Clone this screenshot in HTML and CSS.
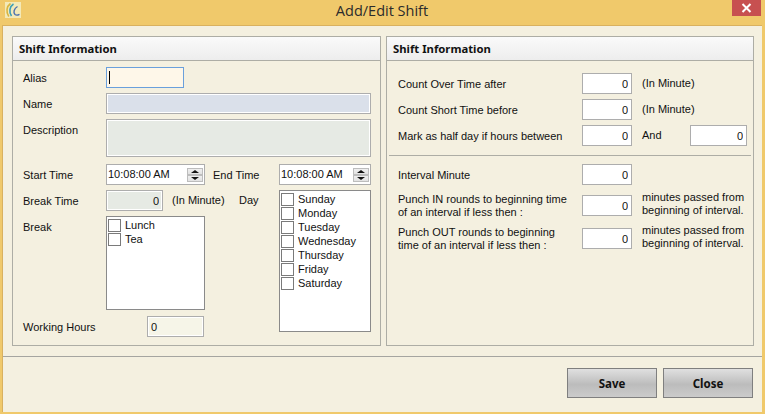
FILE: index.html
```html
<!DOCTYPE html>
<html lang="en">
<head>
    <meta charset="UTF-8">
    <meta name="viewport" content="width=device-width, initial-scale=1.0">
    <title>Add/Edit Shift</title>
    <link rel="stylesheet" href="styles.css">
</head>
<body>
    <div class="window">
        <div class="titlebar">
            <svg class="app-icon" width="16" height="16" viewBox="0 0 16 16">
                <rect width="16" height="16" fill="#f3e9b8"/>
                <path d="M5.5 1.5C1.5 4.5 0.8 10 3.8 14.5" fill="none" stroke="#d9b53f" stroke-width="1.6"/>
                <path d="M8.5 2C4.5 4.5 3.8 10 6.5 14" fill="none" stroke="#3f9fb5" stroke-width="1.6"/>
                <path d="M12.5 4.5C9 6.5 8 10.5 10 12.5C11 13.3 12.8 13.2 14.5 12.3" fill="none" stroke="#4c6fae" stroke-width="1.4"/>
            </svg>
            <span class="title">Add/Edit Shift</span>
            <div class="close-x">
                <svg width="11" height="10" viewBox="0 0 11 10">
                    <path d="M1.5 1L9.5 9M9.5 1L1.5 9" stroke="#fff" stroke-width="2"/>
                </svg>
            </div>
        </div>
        <div class="content">
            <div class="panels">
                <section class="panel">
                    <h2 class="panel-head">Shift Information</h2>
                    <div class="left-grid">
                        <label>Alias</label>
                        <div class="field alias span3"><span class="caret"></span></div>

                        <label>Name</label>
                        <input class="field name span3" type="text" readonly>

                        <label>Description</label>
                        <textarea class="field desc span3" readonly></textarea>

                        <label>Start Time</label>
                        <div class="field time">
                            <span>10:08:00 AM</span>
                            <div class="spin"><i class="up"></i><i class="down"></i></div>
                        </div>
                        <label class="end-label">End Time</label>
                        <div class="field time">
                            <span>10:08:00 AM</span>
                            <div class="spin"><i class="up"></i><i class="down"></i></div>
                        </div>

                        <label>Break Time</label>
                        <div class="break-row">
                            <input class="field break-val num" type="text" value="0" readonly>
                            <span class="unit">(In Minute)</span>
                            <span class="day-label">Day</span>
                        </div>
                        <div class="checklist days">
                            <div class="check"><i></i>Sunday</div>
                            <div class="check"><i></i>Monday</div>
                            <div class="check"><i></i>Tuesday</div>
                            <div class="check"><i></i>Wednesday</div>
                            <div class="check"><i></i>Thursday</div>
                            <div class="check"><i></i>Friday</div>
                            <div class="check"><i></i>Saturday</div>
                        </div>

                        <label>Break</label>
                        <div class="checklist breaks">
                            <div class="check"><i></i>Lunch</div>
                            <div class="check"><i></i>Tea</div>
                        </div>

                        <div class="hours-row">
                            <label>Working Hours</label>
                            <input class="field hours" type="text" value="0" readonly>
                        </div>
                    </div>
                </section>

                <section class="panel">
                    <h2 class="panel-head">Shift Information</h2>
                    <div class="right-body">
                        <div class="row">
                            <label class="row-label">Count Over Time after</label>
                            <input class="field num w50" type="text" value="0" readonly>
                            <span class="after">(In Minute)</span>
                        </div>
                        <div class="row">
                            <label class="row-label">Count Short Time before</label>
                            <input class="field num w50" type="text" value="0" readonly>
                            <span class="after">(In Minute)</span>
                        </div>
                        <div class="row">
                            <label class="row-label">Mark as half day if hours between</label>
                            <input class="field num w50" type="text" value="0" readonly>
                            <span class="after and">And</span>
                            <input class="field num w57" type="text" value="0" readonly>
                        </div>
                        <hr class="divider">
                        <div class="row">
                            <label class="row-label">Interval Minute</label>
                            <input class="field num w50" type="text" value="0" readonly>
                        </div>
                        <div class="row punch-in">
                            <label class="row-label two-line">Punch IN rounds to beginning time<br>of an interval if less then :</label>
                            <input class="field num w50" type="text" value="0" readonly>
                            <span class="after note">minutes passed from<br>beginning of interval.</span>
                        </div>
                        <div class="row">
                            <label class="row-label two-line">Punch OUT rounds to beginning<br>time of an interval if less then :</label>
                            <input class="field num w50" type="text" value="0" readonly>
                            <span class="after note">minutes passed from<br>beginning of interval.</span>
                        </div>
                    </div>
                </section>
            </div>
            <div class="footer">
                <button class="btn">Save</button>
                <button class="btn">Close</button>
            </div>
        </div>
    </div>
</body>
</html>
```

FILE: styles.css
```css
* {
    box-sizing: border-box;
}
html, body {
    margin: 0;
    padding: 0;
}
body {
    width: 765px;
    height: 414px;
    overflow: hidden;
    font-family: "Liberation Sans", Arial, sans-serif;
    font-size: 11px;
    color: #111;
    background-color: #f0c96b;
}
.window {
    display: flex;
    flex-direction: column;
    height: 414px;
    padding: 0 3px 2px 2px;
}
.titlebar {
    display: flex;
    align-items: flex-start;
    height: 25px;
    flex: none;
    margin-right: -3px;
    position: relative;
}
.app-icon {
    margin: 2px 0 0 3px;
}
.title {
    position: absolute;
    left: 0;
    right: 3px;
    top: 0;
    line-height: 21px;
    text-align: center;
    font-family: "Open Sans", Arial, sans-serif;
    font-size: 14.5px;
    color: #2b2b2b;
}
.close-x {
    margin-left: auto;
    margin-right: 4px;
    width: 29px;
    height: 16px;
    background-color: #c75050;
    display: flex;
    align-items: center;
    justify-content: center;
}
.content {
    flex: 1;
    display: flex;
    flex-direction: column;
    background-color: #f4f0e0;
    border: 1px solid #d9b15f;
    border-width: 1px 0 0 1px;
}
.panels {
    display: flex;
    gap: 5px;
    padding: 10px 0 0 9px;
    height: 330px;
    flex: none;
}
.panel {
    width: 369px;
    height: 310px;
    border: 1px solid #adada5;
    flex: none;
}
.panel + .panel {
    width: 368px;
}
.panel-head {
    margin: 0;
    height: 24px;
    padding-left: 6px;
    line-height: 23px;
    font-size: 11.3px;
    font-weight: bold;
    font-family: "Noto Sans", Arial, sans-serif;
    color: #111;
    background: linear-gradient(#fafafa, #ededed);
    border-bottom: 1px solid #adada5;
}
.left-grid {
    display: grid;
    grid-template-columns: 83px 99px 74px 92px;
    grid-auto-rows: min-content;
    row-gap: 5px;
    padding: 6px 0 0 10px;
}
label {
    height: 21px;
    line-height: 23px;
    white-space: nowrap;
}
.unit, .day-label, .after {
    line-height: 21px;
    white-space: nowrap;
}
.field {
    display: block;
    height: 21px;
    margin: 0;
    padding: 0 3px;
    font-family: inherit;
    font-size: 11px;
    color: #111;
    line-height: 19px;
    border: 1px solid #adadad;
    background-color: #fff;
    border-radius: 0;
    outline: none;
    resize: none;
}
.span3 {
    grid-column: span 3;
}
.alias {
    width: 78px;
    padding-left: 2px;
    background-color: #fef7e9;
    border-color: #6aa0dc;
    display: flex;
    align-items: center;
    justify-self: start;
}
.caret {
    width: 1px;
    height: 13px;
    background-color: #000;
}
.name {
    width: 265px;
    background-color: #dae0ea;
    box-shadow: inset 0 0 0 1px #fff;
}
.desc {
    width: 265px;
    height: 38px;
    margin-bottom: 2px;
    background-color: #e6eae4;
    box-shadow: inset 0 0 0 1px #fff;
}
.time {
    display: flex;
    align-items: center;
    justify-content: space-between;
    padding: 0 1px;
}
.spin {
    width: 16px;
    height: 14px;
    display: flex;
    flex-direction: column;
}
.spin i {
    flex: 1;
    position: relative;
    background: linear-gradient(#efefef, #e2e2e2);
    border: 1px solid #bdbdbd;
}
.spin i::after {
    content: "";
    position: absolute;
    left: 3px;
    top: 1px;
    border-left: 4px solid transparent;
    border-right: 4px solid transparent;
}
.spin .up::after {
    border-bottom: 3px solid #111;
}
.spin .down::after {
    border-top: 3px solid #111;
}
.end-label {
    padding-left: 8px;
}
.break-row {
    display: flex;
    grid-column: span 2;
}
.break-val {
    width: 57px;
    background-color: #e6eae4;
    box-shadow: inset 0 0 0 1px #fff;
}
.num {
    text-align: right;
    padding-right: 3px;
}
.unit {
    margin-left: 9px;
    width: 67px;
}
.checklist {
    background-color: #fff;
    border: 1px solid #8a8a8a;
    padding: 2px 1px;
}
.check {
    display: flex;
    align-items: flex-start;
    height: 14px;
    line-height: 12px;
}
.check i {
    width: 13px;
    height: 13px;
    margin-right: 4px;
    border: 1px solid #7a7a7a;
    background-color: #fff;
    flex: none;
}
.days {
    grid-column: 4;
    grid-row: span 3;
    height: 142px;
}
.breaks {
    grid-column: 2;
    height: 94px;
}
.hours-row {
    grid-column: 1 / span 2;
    display: flex;
    margin-top: 1px;
}
.hours-row label {
    width: 124px;
}
.hours {
    width: 57px;
    background-color: #f6f5e8;
    box-shadow: inset 0 0 0 1px #fff;
}
.right-body {
    padding: 12px 0 0 11px;
}
.row {
    display: flex;
    align-items: center;
    height: 21px;
    margin-bottom: 5px;
}
.row-label {
    width: 184px;
    flex: none;
}
.two-line, .note {
    height: auto;
    line-height: 13px;
}
.note {
    margin-top: -4px;
}
.w50 {
    width: 50px;
}
.w57 {
    width: 57px;
}
.after {
    margin-left: 10px;
}
.and {
    width: 48px;
    flex: none;
}
.divider {
    margin: 9px 3px 8px -9px;
    border: none;
    height: 1px;
    background-color: #adada5;
    width: 362px;
}
.punch-in {
    margin-top: 10px;
    margin-bottom: 12px;
}
.footer {
    flex: 1;
    border-top: 1px solid #a5a5a0;
    display: flex;
    justify-content: flex-end;
    gap: 6px;
    padding: 11px 9px 0 0;
}
.btn {
    width: 90px;
    height: 30px;
    font-family: "Noto Sans", Arial, sans-serif;
    font-size: 11.5px;
    font-weight: bold;
    color: #111;
    border: 1px solid #7f7f7f;
    background: linear-gradient(#e0e0e0, #bcbcbc 55%, #cbcbcb);
    cursor: pointer;
}
```
